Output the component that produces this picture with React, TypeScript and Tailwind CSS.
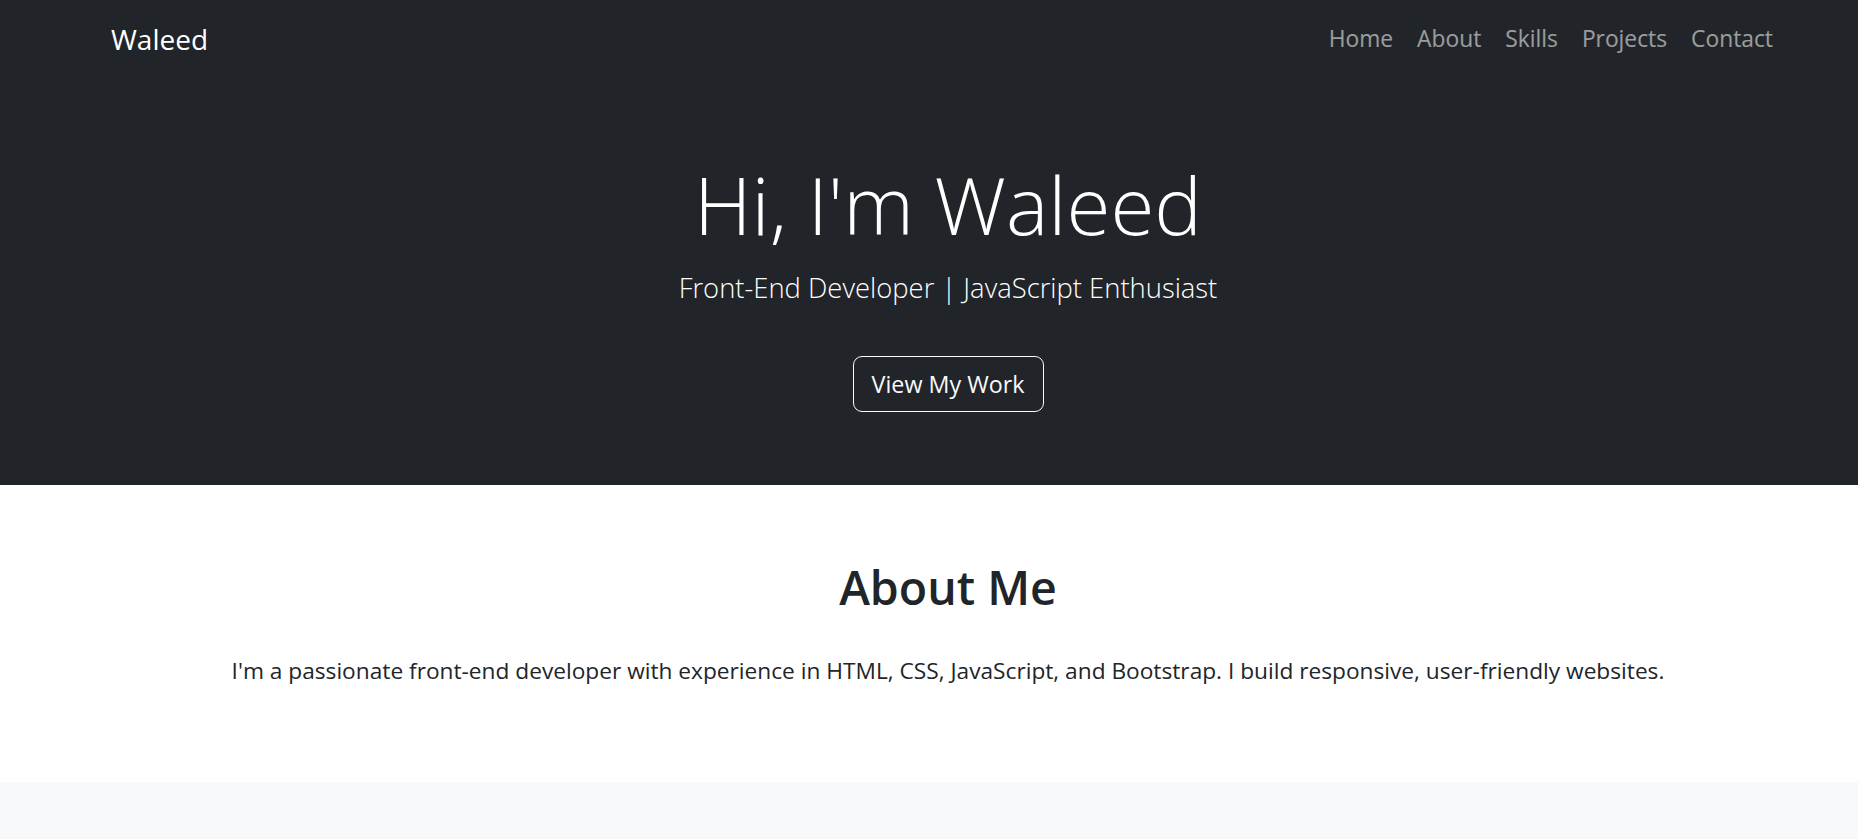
import React from 'react'

const links = ['Home', 'About', 'Skills', 'Projects', 'Contact']

export default function App() {
  return (
    <div className="min-h-[839px] bg-[#f8f9fa] font-['Open_Sans','Noto_Sans',sans-serif] text-[#212529]">
      {/* Navbar */}
      <nav className="h-[78px] bg-[#212529]">
        <div className="ml-[111px] w-[1674px] h-full flex items-center justify-between">
          <a href="#" className="text-[28px] text-white leading-none">
            Waleed
          </a>
          <ul className="flex items-center">
            {links.map((l) => (
              <li key={l}>
                <a href="#" className="px-3 text-[22.8px] text-white/55 hover:text-white/75">
                  {l}
                </a>
              </li>
            ))}
          </ul>
        </div>
      </nav>

      {/* Hero */}
      <header className="bg-[#212529] text-white pt-[78px] pb-[73px]">
        <div className="ml-[111px] w-[1674px] text-center">
          <h1 className="text-[80px] font-light leading-[1.2] mb-[15px]">Hi, I'm Waleed</h1>
          <p className="text-[27.4px] font-light leading-[1.5] mb-[48px]">
            Front-End Developer | JavaScript Enthusiast
          </p>
          <a
            href="#projects"
            className="inline-flex items-center justify-center w-[191px] h-[56px] border border-[#f8f9fa] rounded-[9px] text-[23.3px] text-[#f8f9fa]"
          >
            View My Work
          </a>
        </div>
      </header>

      {/* About */}
      <section className="bg-white pt-[75px] pb-[70px]">
        <div className="ml-[111px] w-[1674px] text-center">
          <h2 className="text-[46.5px] font-semibold leading-[1.2] mb-[38px]">About Me</h2>
          <p className="text-[22.7px] leading-[1.5] mb-[24px]">
            I'm a passionate front-end developer with experience in HTML, CSS, JavaScript, and Bootstrap. I build
            responsive, user-friendly websites.
          </p>
        </div>
      </section>
    </div>
  )
}
